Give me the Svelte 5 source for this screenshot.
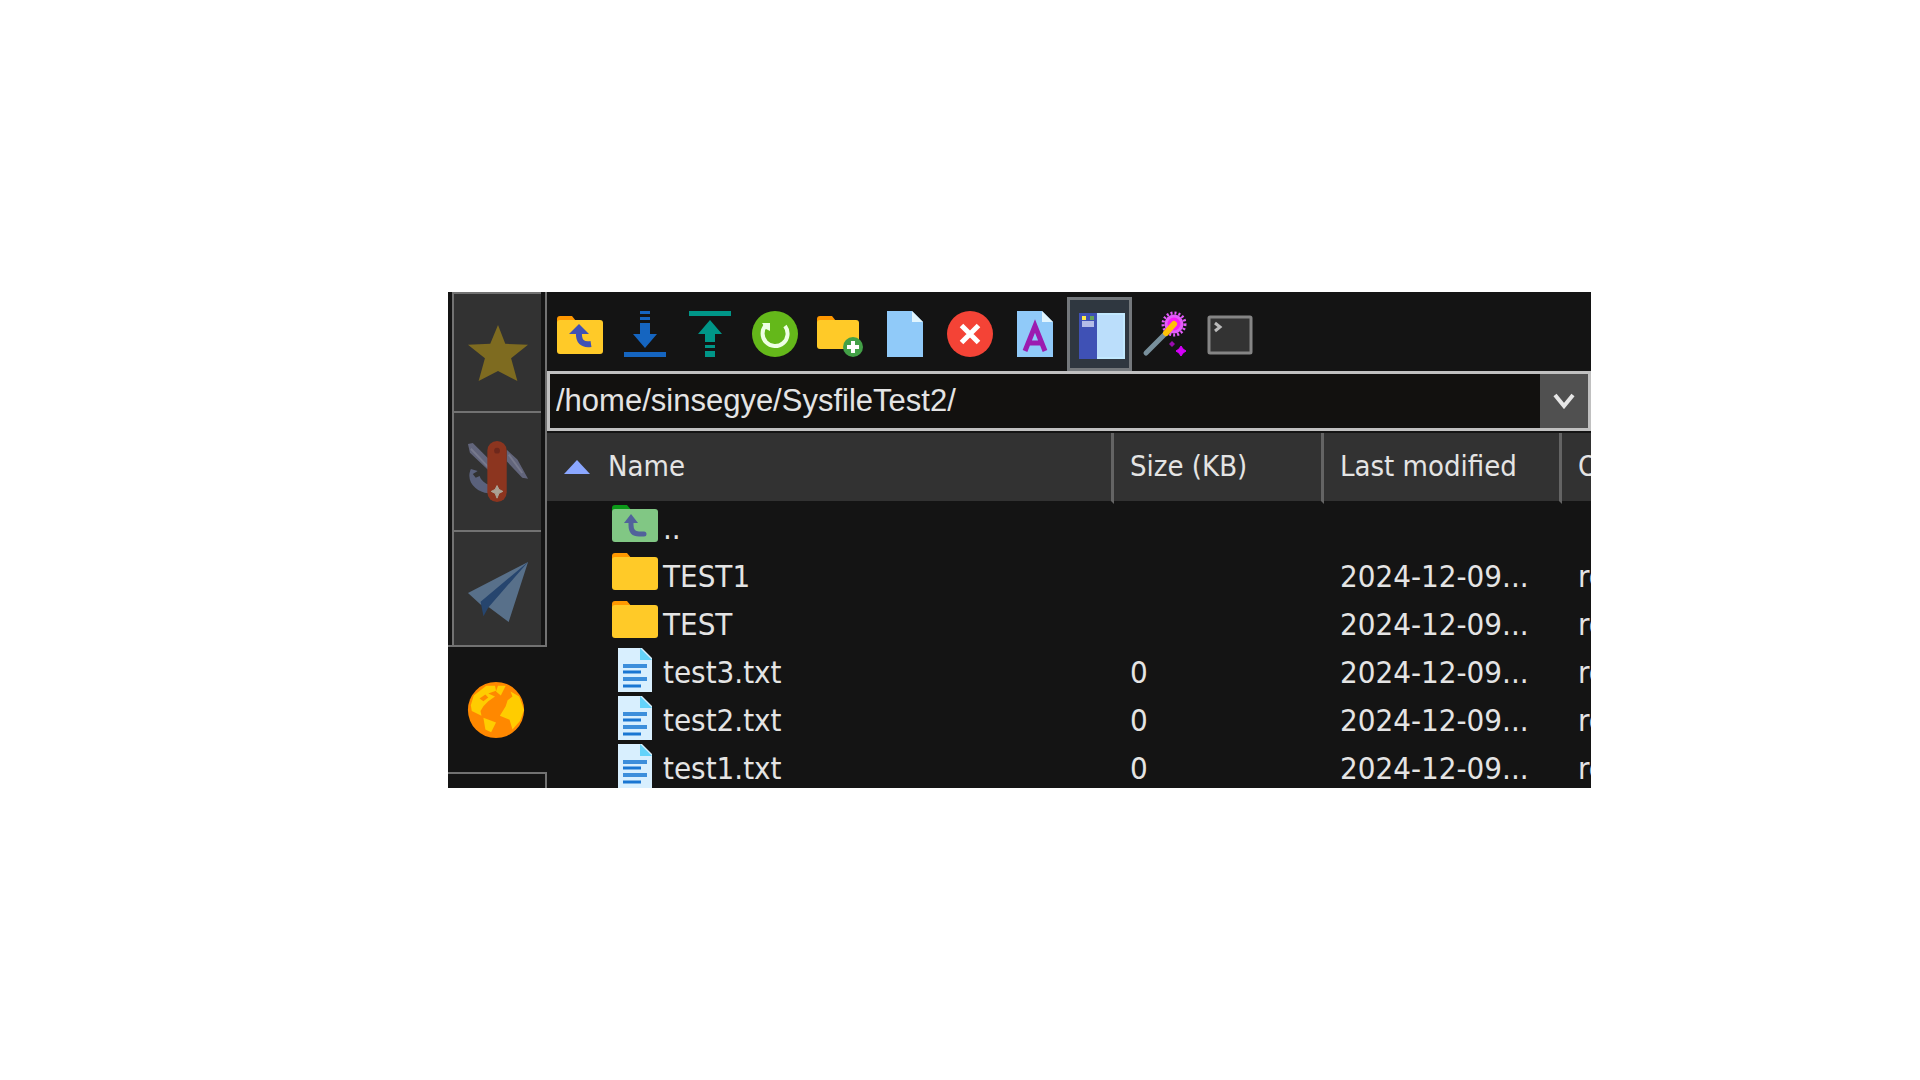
<script lang="ts">
    type Entry = { name: string; kind: "up" | "folder" | "text"; size: string; modified: string; owner: string };

    const tabs = ["Sessions", "Tools", "Macros", "Sftp"];
    const tools = [
        "Parent folder",
        "Download",
        "Upload",
        "Refresh",
        "New folder",
        "New file",
        "Delete",
        "Rename",
        "Tree view",
        "Properties",
        "Terminal",
    ];

    const entries: Entry[] = [
        { name: "..", kind: "up", size: "", modified: "", owner: "" },
        { name: "TEST1", kind: "folder", size: "", modified: "2024-12-09...", owner: "root" },
        { name: "TEST", kind: "folder", size: "", modified: "2024-12-09...", owner: "root" },
        { name: "test3.txt", kind: "text", size: "0", modified: "2024-12-09...", owner: "root" },
        { name: "test2.txt", kind: "text", size: "0", modified: "2024-12-09...", owner: "root" },
        { name: "test1.txt", kind: "text", size: "0", modified: "2024-12-09...", owner: "root" },
    ];

    let activeTab = $state("Sftp");
    let treeView = $state(true);
    let path = $state("/home/sinsegye/SysfileTest2/");

    function run(tool: string) {
        if (tool === "Tree view") treeView = !treeView;
    }
</script>

{#snippet tabIcon(name: string)}
    <svg viewBox="0 0 64 64" aria-hidden="true">
        {#if name === "Sessions"}
            <path d="M32 3 39.500 22.500 63 23.500 45.500 37.500 52 61 32 50.500 12 61 18.500 37.500 1 23.500 24 22.500z" fill="#7e6b20" />
        {:else if name === "Tools"}
            <path d="M1 3l5-1 18 18v12L3 12zM41 9l11 10 11 20-6-1-16-17z" fill="#62657b" />
            <path d="M4 8 22 27M43 14 57 33" stroke="#77798c" stroke-width="2" />
            <path d="M4 29C-2 42 10 53 22 54V45C16 42 14 39 13 36l-4 2-3-4 5-3z" fill="#5a617c" />
            <rect x="21" y="0" width="20" height="63" rx="10" fill="#8c351f" />
            <circle cx="31" cy="10" r="3" fill="#6e281c" />
            <path d="M31 46l2 4 4 2-4 2-2 5-2-5-4-2 4-2z" fill="#aaa294" stroke="#aaa294" />
        {:else if name === "Macros"}
            <path d="M1 34 63 2 43 64 23 49 14 46z" fill="#58708a" />
            <path d="M14 43 63 2 22 49 17 58z" fill="#26456e" />
        {:else}
            <circle cx="32" cy="32" r="29" fill="#ff8800" />
            <path d="M9 17 22 7 31 7 32 12 24 15 31 18 24 23 19 28 16 33 17 38 7 33 6 27z" fill="#ffcc00" />
            <path d="M34 7h8l-5 10-5-4z" fill="#ffcc00" />
            <path d="M47 13l9 5 5 14-4 11-8 9-3-10-10-4 6-10 2-6 5-4z" fill="#ffcc00" />
            <path d="M19 40l13 5-5 10-6-3z" fill="#ffcc00" />
            <path d="M15 20l6-4 3 3-5 4z" fill="#ff8800" />
        {/if}
    </svg>
{/snippet}

{#snippet toolIcon(name: string)}
    <svg viewBox="0 0 46 46" aria-hidden="true">
        {#if name === "Parent folder"}
            <path d="M0 12V8q0-3 3-3h12l4 5v3H0z" fill="#ff9800" />
            <rect x="0" y="9" width="46" height="34" rx="3" fill="#ffca28" />
            <path d="M22 21q-1 14 12 12" fill="none" stroke="#3f51b5" stroke-width="6" />
            <path d="M12 23l10-10 10 10z" fill="#3f51b5" />
        {:else if name === "Download"}
            <path d="M18 0h10v3H18zM18 6h10v3H18zM18 12h10v11h7L23 37 11 23h7z" fill="#1565c0" />
            <rect x="2" y="41" width="42" height="5" fill="#1565c0" />
        {:else if name === "Upload"}
            <rect x="2" y="0" width="42" height="5" fill="#009688" />
            <path d="M23 9l12 14h-7v8H18v-8h-7zM18 34h10v3H18zM18 40h10v6H18z" fill="#009688" />
        {:else if name === "Refresh"}
            <circle cx="23" cy="23" r="23" fill="#64b81a" />
            <path d="M14 14a12.500 12.500 0 1 0 19 1" fill="none" stroke="#efffe5" stroke-width="4" />
            <path d="M10 12h8v8l-4-2z" fill="#efffe5" />
        {:else if name === "New folder"}
            <path d="M0 12V8q0-3 3-3h12l4 5v3H0z" fill="#ff9800" />
            <rect x="0" y="9" width="42" height="29" rx="3" fill="#ffca28" />
            <circle cx="36" cy="36" r="10" fill="#43a047" />
            <path d="M36 30v12M30 36h12" stroke="#fff" stroke-width="4" />
        {:else if name === "New file"}
            <path d="M5 0h25l11 11v35H5z" fill="#90caf9" />
            <path d="M30 0l11 11H30z" fill="#e1f5fe" />
        {:else if name === "Delete"}
            <circle cx="23" cy="23" r="23" fill="#f44336" />
            <path d="M14.500 14.500l17 17M31.500 14.500l-17 17" stroke="#fff" stroke-width="5" />
        {:else if name === "Rename"}
            <path d="M5 0h25l11 11v35H5z" fill="#90caf9" />
            <path d="M30 0l11 11H30z" fill="#e1f5fe" />
            <path d="M13 40l10-25 10 25M16 32h14" fill="none" stroke="#9c1bb0" stroke-width="5" />
        {:else if name === "Tree view"}
            <path d="M0 0h18v46H0z" fill="#3f51b5" />
            <path d="M18 0h28v46H18z" fill="#bbdefb" />
            <path d="M18 1h27v44H18" fill="none" stroke="#c2e9ff" stroke-width="2" />
            <rect x="3" y="8" width="12" height="6" fill="#b4bce8" />
            <rect x="3" y="3" width="4" height="4" fill="#ffe94a" />
            <rect x="11" y="3" width="4" height="4" fill="#66a35c" />
        {:else if name === "Properties"}
            <circle cx="32" cy="13" r="8" fill="#f51cf5" />
            <circle cx="32" cy="13" r="8" fill="none" stroke="#e45cfb" stroke-width="3" />
            <circle cx="32" cy="13" r="11" fill="none" stroke="#e45cfb" stroke-width="3" stroke-dasharray="2 2" />
            <path d="M4 42l20-20" stroke="#78909c" stroke-width="5" stroke-linecap="round" />
            <path d="M24 22l8-9" stroke="#ffc107" stroke-width="6" stroke-linecap="round" />
            <path d="M39 35l2 3 3 2-3 2-2 3-2-3-3-2 3-2z" fill="#d500f9" stroke="#d500f9" />
            <path d="M30 30l3 3-3 3-3-3z" fill="#9c0cb0" />
        {:else}
            <rect x="2" y="6" width="42" height="36" rx="1" fill="#333" stroke="#858585" stroke-width="3" />
            <path d="M8 12l5 4-5 4" fill="none" stroke="#bbb" stroke-width="3" />
        {/if}
    </svg>
{/snippet}

{#snippet fileIcon(kind: string)}
    <svg viewBox="0 0 46 44" aria-hidden="true">
        {#if kind === "text"}
            <path d="M6 0h24l10 10v34H6z" fill="#d8effe" />
            <path d="M28 0l12 12H28z" fill="#64d3fa" />
            <path d="M11 18h24M11 31h24" stroke="#3c8edb" stroke-width="4" />
            <path d="M11 24h18M11 38h18" stroke="#1976d2" stroke-width="3" />
        {:else}
            <path d="M0 10V4q0-3 3-3h12l5 6v3z" fill={kind === "up" ? "#0b9a18" : "#ff9800"} />
            <rect x="0" y="5" width="46" height="33" rx="3" fill={kind === "up" ? "#81c784" : "#ffca28"} />
            {#if kind === "up"}
                <path d="M19 15v6q0 9 8 9h5" fill="none" stroke="#51629b" stroke-width="5" stroke-linecap="round" />
                <path d="M12 19l7-9 7 9z" fill="#51629b" />
            {/if}
        {/if}
    </svg>
{/snippet}

<main>
    <div class="window">
        <nav aria-label="Panels">
            {#each tabs as tab}
                <button class="tab" class:active={activeTab === tab} aria-label={tab} onclick={() => (activeTab = tab)}>
                    {@render tabIcon(tab)}
                </button>
            {/each}
            <div class="rest"></div>
        </nav>

        <section class="browser">
            <div class="toolbar" role="toolbar" aria-label="File actions">
                {#each tools as tool}
                    <button class="tool" class:pressed={tool === "Tree view" && treeView} aria-label={tool} onclick={() => run(tool)}>
                        {@render toolIcon(tool)}
                    </button>
                {/each}
            </div>

            <div class="path">
                <input type="text" aria-label="Remote path" spellcheck="false" bind:value={path} />
                <button aria-label="Recent paths">
                    <svg viewBox="0 0 22 16" aria-hidden="true">
                        <path d="M2 2l9 11 9-11" fill="none" stroke="#e6e6e6" stroke-width="4" />
                    </svg>
                </button>
            </div>

            <div class="list">
                <table>
                    <colgroup>
                        <col />
                        <col class="size" />
                        <col class="modified" />
                        <col class="owner" />
                    </colgroup>
                    <thead>
                        <tr>
                            <th aria-sort="ascending">
                                <div class="sorted">
                                    <svg viewBox="0 0 28 16" aria-hidden="true"><path d="M14 2l13 14H1z" fill="#8ba7ff" /></svg>
                                    Name
                                </div>
                            </th>
                            <th>Size (KB)</th>
                            <th>Last modified</th>
                            <th>Owner</th>
                        </tr>
                    </thead>
                    <tbody>
                        {#each entries as { name, kind, size, modified, owner }}
                            <tr>
                                <td>
                                    <div class="file">
                                        {@render fileIcon(kind)}
                                        <span>{name}</span>
                                    </div>
                                </td>
                                <td>{size}</td>
                                <td>{modified}</td>
                                <td>{owner}</td>
                            </tr>
                        {/each}
                    </tbody>
                </table>
            </div>
        </section>
    </div>
</main>

<style>
    :global(body) {
        margin: 0;
        background: #fff;
    }

    main {
        box-sizing: border-box;
        height: 100vh;
        padding: 292px 329px 292px 448px;
        font-family: "DejaVu Sans Condensed", "Noto Sans", sans-serif;
        color: #e4e4e4;
    }

    button {
        padding: 0;
        border: 0;
        background: none;
    }

    svg {
        display: block;
        flex: none;
    }

    .window {
        display: flex;
        height: 100%;
        overflow: hidden;
        background: #141414;
    }

    nav {
        display: flex;
        flex-direction: column;
        flex: none;
        width: 99px;
    }

    .tab {
        display: grid;
        place-items: center;
        box-sizing: border-box;
        flex: none;
        height: 119px;
        margin: 0 6px 0 4px;
        border-top: 2px solid #727272;
        border-left: 2px solid #727272;
        background: #323232;
        box-shadow: 4px 0 #141414, 6px 0 #727272;
    }

    .tab svg {
        width: 62px;
        height: 62px;
    }

    .tab.active {
        position: relative;
        height: 127px;
        margin: -4px 0 0 0;
        padding-right: 3px;
        border-left: 0;
        background: #141414;
        box-shadow: none;
    }

    .rest {
        flex: 1;
        border: solid #727272;
        border-width: 2px 2px 0 0;
    }

    .browser {
        display: flex;
        flex-direction: column;
        flex: 1;
        min-width: 0;
    }

    .toolbar {
        display: flex;
        flex: none;
        height: 74px;
        padding-top: 5px;
    }

    .tool {
        display: grid;
        place-items: center;
        box-sizing: border-box;
        width: 65px;
    }

    .tool svg {
        width: 46px;
        height: 46px;
    }

    .tool.pressed {
        padding: 4px 0 0 4px;
        border: 3px solid #74787c;
        background: #2f3740;
    }

    .path {
        display: flex;
        flex: none;
        height: 54px;
        border: 3px solid #c0c0c0;
        background: #12110f;
    }

    .path input {
        flex: 1;
        min-width: 0;
        padding: 0 6px;
        border: 0;
        outline: 0;
        background: none;
        color: #e4e4e4;
        font-family: "Liberation Sans", Arial, sans-serif;
        font-size: 31px;
    }

    .path button {
        display: grid;
        place-items: center;
        width: 48px;
        background: #505050;
    }

    .path button svg {
        width: 22px;
        height: 16px;
    }

    .list {
        flex: 1;
        min-height: 0;
        overflow: hidden;
        padding-top: 2px;
    }

    table {
        width: 100%;
        table-layout: fixed;
        border-collapse: separate;
        border-spacing: 0;
    }

    .size {
        width: 210px;
    }

    .modified {
        width: 238px;
    }

    .owner {
        width: 29px;
    }

    th,
    td {
        box-sizing: border-box;
        padding: 0 0 0 16px;
        overflow: hidden;
        white-space: nowrap;
        text-align: left;
        font-weight: normal;
    }

    th {
        height: 71px;
        padding-bottom: 2px;
        border-right: 3px solid #646464;
        border-bottom: 3px solid #141414;
        background: #323232;
        font-size: 29px;
    }

    th:last-child {
        border-right: 0;
    }

    td {
        height: 48px;
        font-size: 31px;
        line-height: 48px;
    }

    .sorted {
        display: flex;
        align-items: center;
        gap: 17px;
    }

    .sorted svg {
        width: 28px;
        height: 16px;
    }

    .file {
        display: flex;
        gap: 5px;
        height: 48px;
        padding-left: 49px;
    }

    .file svg {
        width: 46px;
        height: 44px;
    }
</style>
